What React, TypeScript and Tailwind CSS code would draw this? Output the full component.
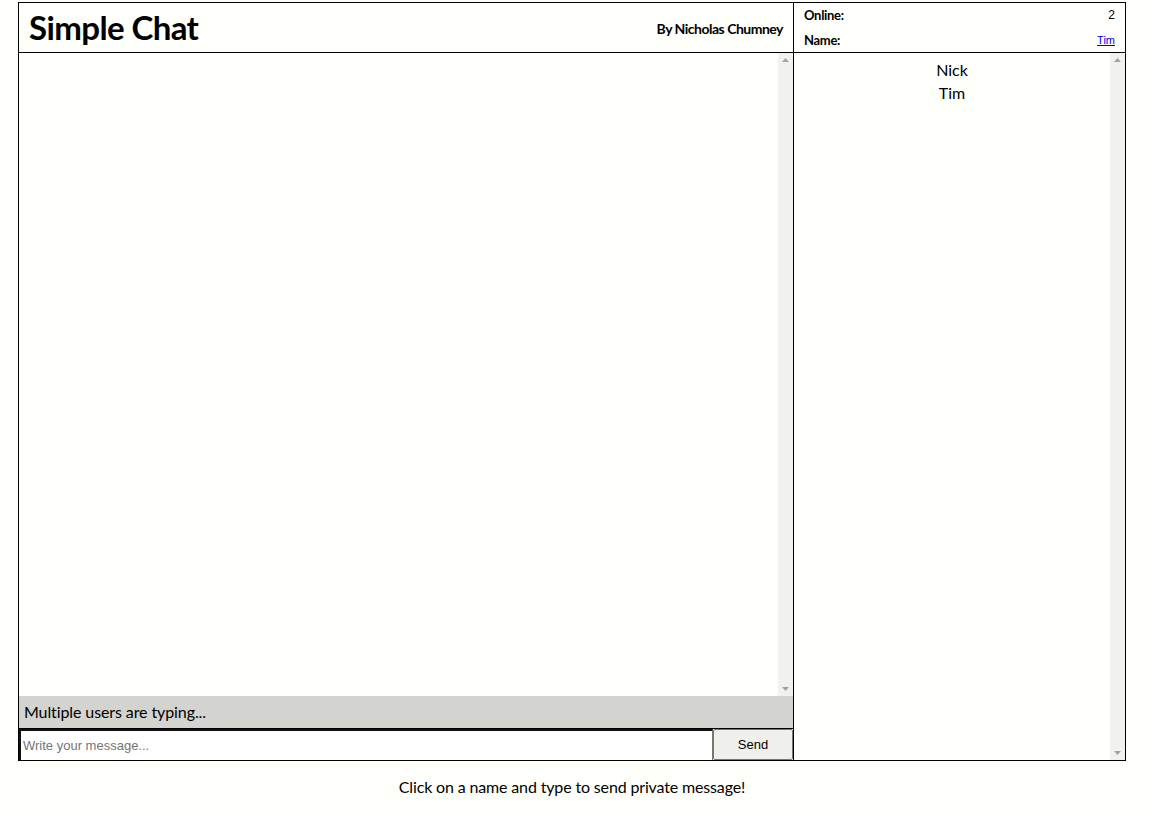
import React, { useState } from "react";

const lato = { fontFamily: "Lato, 'Noto Sans', sans-serif" };
const arial = { fontFamily: "'Liberation Sans', Arial, sans-serif" };

// Fake classic scrollbar: light track with tiny arrows at both ends
const ScrollTrack: React.FC = () => (
  <div className="flex w-[15px] shrink-0 flex-col items-center justify-between bg-[#f1f1ed] py-[5px]">
    <svg width="7" height="4" viewBox="0 0 7 4">
      <polygon points="3.5,0 7,4 0,4" fill="#a3a3a3" />
    </svg>
    <svg width="7" height="4" viewBox="0 0 7 4">
      <polygon points="0,0 7,0 3.5,4" fill="#a3a3a3" />
    </svg>
  </div>
);

export default function App() {
  const [message, setMessage] = useState("");
  const users = ["Nick", "Tim"];

  return (
    <div className="min-h-[816px] w-full bg-[#fffffb] pt-[2px] text-black" style={lato}>
      {/* Main frame */}
      <div className="ml-[18px] flex h-[759px] w-[1108px] border border-black">
        {/* Chat column */}
        <div className="flex w-[775px] flex-col border-r border-black">
          {/* Header */}
          <div className="flex h-[50px] shrink-0 items-center justify-between border-b border-black pl-[10px] pr-[10px]">
            <h1 className="text-[33px] font-bold leading-none tracking-[-0.6px]">Simple Chat</h1>
            <span className="pt-[1px] text-[14px] font-bold tracking-[-0.5px]">By Nicholas Chumney</span>
          </div>

          {/* Messages */}
          <div className="flex min-h-0 flex-1">
            <div className="flex-1"></div>
            <ScrollTrack />
          </div>

          {/* Typing indicator */}
          <div className="flex h-[33px] shrink-0 items-center border-b border-black bg-[#d3d3d0] pl-[5px] text-[16px] tracking-[-0.1px]">
            Multiple users are typing...
          </div>

          {/* Input row */}
          <div className="flex h-[31px] shrink-0">
            <input
              type="text"
              value={message}
              onChange={(e) => setMessage(e.target.value)}
              placeholder="Write your message..."
              className="min-w-0 flex-1 border-t-2 border-l-2 border-[#111] border-r border-r-[#777] bg-white px-[2px] text-[13px] text-black placeholder-[#757575] outline-none"
              style={arial}
            />
            <button
              className="w-[80px] rounded-[2px] border border-[#767676] bg-[#efefeb] text-[13px] text-black"
              style={arial}
            >
              Send
            </button>
          </div>
        </div>

        {/* Users column */}
        <div className="flex flex-1 flex-col">
          <div className="flex h-[50px] shrink-0 flex-col justify-center gap-[12px] border-b border-black pl-[10px] pr-[10px] text-[13px]">
            <div className="flex items-center justify-between leading-none">
              <span className="font-bold tracking-[-0.3px]">Online:</span>
              <span className="text-[12px]" style={arial}>
                {users.length}
              </span>
            </div>
            <div className="flex items-center justify-between leading-none">
              <span className="font-bold tracking-[-0.3px]">Name:</span>
              <a href="#" className="text-[11px] text-[#0000ee] underline" style={arial}>
                Tim
              </a>
            </div>
          </div>
          <div className="flex min-h-0 flex-1">
            <ul className="flex-1 pt-[5px] text-center text-[16px] leading-[23px]">
              {users.map((u) => (
                <li key={u} className="cursor-pointer">
                  {u}
                </li>
              ))}
            </ul>
            <ScrollTrack />
          </div>
        </div>
      </div>

      {/* Footer hint */}
      <p className="ml-[18px] mt-[14px] w-[1108px] text-center text-[16px] tracking-[-0.15px]">
        Click on a name and type to send private message!
      </p>
    </div>
  );
}
